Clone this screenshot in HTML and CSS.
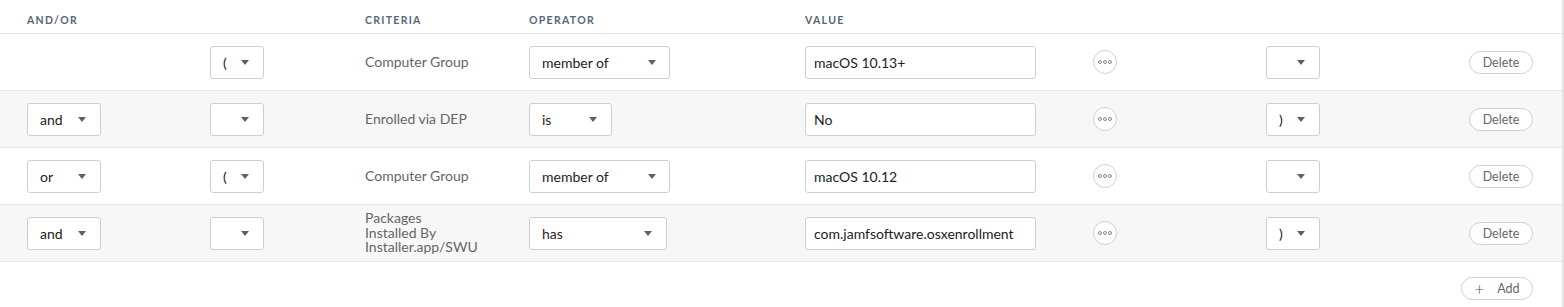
FILE: index.html
```html
<!DOCTYPE html>
<html lang="en">
<head>
    <meta charset="UTF-8">
    <title>Criteria</title>
    <link rel="stylesheet" href="styles.css">
</head>
<body>
    <div class="criteria-table">
        <div class="crit-row crit-head">
            <div>AND/OR</div>
            <div></div>
            <div>CRITERIA</div>
            <div>OPERATOR</div>
            <div>VALUE</div>
            <div></div>
            <div></div>
            <div></div>
        </div>

        <!-- ligne 1 -->
        <div class="crit-row">
            <div></div>
            <div><div class="pick pick-paren"><span>(</span><i class="caret"></i></div></div>
            <div class="crit-name">Computer Group</div>
            <div><div class="pick pick-op-wide"><span>member of</span><i class="caret"></i></div></div>
            <div><input class="value-field" type="text" value="macOS 10.13+"></div>
            <div><button class="more-btn"><i></i><i></i><i></i></button></div>
            <div><div class="pick pick-paren"><span></span><i class="caret"></i></div></div>
            <div><button class="pill-btn">Delete</button></div>
        </div>

        <!-- ligne 2 -->
        <div class="crit-row alt">
            <div><div class="pick pick-join"><span>and</span><i class="caret"></i></div></div>
            <div><div class="pick pick-paren"><span></span><i class="caret"></i></div></div>
            <div class="crit-name">Enrolled via DEP</div>
            <div><div class="pick pick-op-small"><span>is</span><i class="caret"></i></div></div>
            <div><input class="value-field" type="text" value="No"></div>
            <div><button class="more-btn"><i></i><i></i><i></i></button></div>
            <div><div class="pick pick-paren"><span>)</span><i class="caret"></i></div></div>
            <div><button class="pill-btn">Delete</button></div>
        </div>

        <!-- ligne 3 -->
        <div class="crit-row">
            <div><div class="pick pick-join"><span>or</span><i class="caret"></i></div></div>
            <div><div class="pick pick-paren"><span>(</span><i class="caret"></i></div></div>
            <div class="crit-name">Computer Group</div>
            <div><div class="pick pick-op-wide"><span>member of</span><i class="caret"></i></div></div>
            <div><input class="value-field" type="text" value="macOS 10.12"></div>
            <div><button class="more-btn"><i></i><i></i><i></i></button></div>
            <div><div class="pick pick-paren"><span></span><i class="caret"></i></div></div>
            <div><button class="pill-btn">Delete</button></div>
        </div>

        <!-- ligne 4 -->
        <div class="crit-row alt">
            <div><div class="pick pick-join"><span>and</span><i class="caret"></i></div></div>
            <div><div class="pick pick-paren"><span></span><i class="caret"></i></div></div>
            <div class="crit-name">Packages<br>Installed By<br>Installer.app/SWU</div>
            <div><div class="pick pick-op-mid"><span>has</span><i class="caret"></i></div></div>
            <div><input class="value-field" type="text" value="com.jamfsoftware.osxenrollment"></div>
            <div><button class="more-btn"><i></i><i></i><i></i></button></div>
            <div><div class="pick pick-paren"><span>)</span><i class="caret"></i></div></div>
            <div><button class="pill-btn">Delete</button></div>
        </div>

        <div class="table-foot">
            <button class="pill-btn add-btn"><span class="plus">+</span>Add</button>
        </div>
    </div>
</body>
</html>
```

FILE: styles.css
```css
body {
    margin: 0;
    font-family: Lato, "Open Sans", sans-serif;
    color: #222;
    background: #fff;
}

.criteria-table {
    width: 1562px;
    min-height: 307px;
    border-right: 2px solid #e3e3e3;
}

.crit-row {
    display: grid;
    grid-template-columns: 183px 155px 164px 276px 288px 173px 203px 64px;
    padding: 0 29px 0 27px;
    height: 57px;
    box-sizing: border-box;
    align-items: center;
    border-bottom: 1px solid #e6e6e6;
}
.crit-row.alt {
    background: #f7f7f7;
}

.crit-head {
    height: 34px;
    font-size: 10.5px;
    font-weight: bold;
    letter-spacing: 1.3px;
    color: #5c6477;
    align-items: end;
    padding-bottom: 7px;
}

.crit-name {
    font-size: 14px;
    color: #666;
    line-height: 14.5px;
}

/* menus déroulants */
.pick {
    box-sizing: border-box;
    height: 33px;
    display: flex;
    align-items: center;
    justify-content: space-between;
    padding: 0 14px 0 12px;
    background: #fff;
    border: 1px solid #cfcfcf;
    border-radius: 3px;
    font-size: 14px;
    color: #222;
}
.pick-join { width: 74px; }
.pick-paren { width: 54px; }
.pick-op-wide { width: 141px; padding-right: 13px; }
.pick-op-small { width: 83px; }
.pick-op-mid { width: 138px; }

.caret {
    width: 0;
    height: 0;
    border-left: 4px solid transparent;
    border-right: 4px solid transparent;
    border-top: 5px solid #5a6170;
}

.value-field {
    box-sizing: border-box;
    width: 231px;
    height: 33px;
    padding: 0 8px;
    border: 1px solid #cfcfcf;
    border-radius: 3px;
    font-family: Lato, "Open Sans", sans-serif;
    font-size: 14px;
    color: #222;
    background: #fff;
}

.more-btn {
    box-sizing: border-box;
    width: 24px;
    height: 24px;
    padding: 0;
    border: 1px solid #cfcfcf;
    border-radius: 50%;
    background: #fff;
    display: flex;
    align-items: center;
    justify-content: center;
    gap: 1px;
}
.more-btn i {
    box-sizing: border-box;
    width: 4px;
    height: 4px;
    border: 1px solid #888;
    border-radius: 50%;
}

.pill-btn {
    box-sizing: border-box;
    height: 23px;
    width: 64px;
    padding: 0;
    border: 1px solid #cfcfcf;
    border-radius: 12px;
    background: #fff;
    font-family: Lato, "Open Sans", sans-serif;
    font-size: 12.5px;
    color: #666;
}

.table-foot {
    display: flex;
    justify-content: flex-end;
    padding: 15px 29px 0 0;
}
.add-btn {
    width: 72px;
    display: flex;
    align-items: center;
    justify-content: center;
}
.add-btn .plus {
    font-size: 17px;
    font-weight: 300;
    margin-right: 13px;
    color: #555;
}
```
